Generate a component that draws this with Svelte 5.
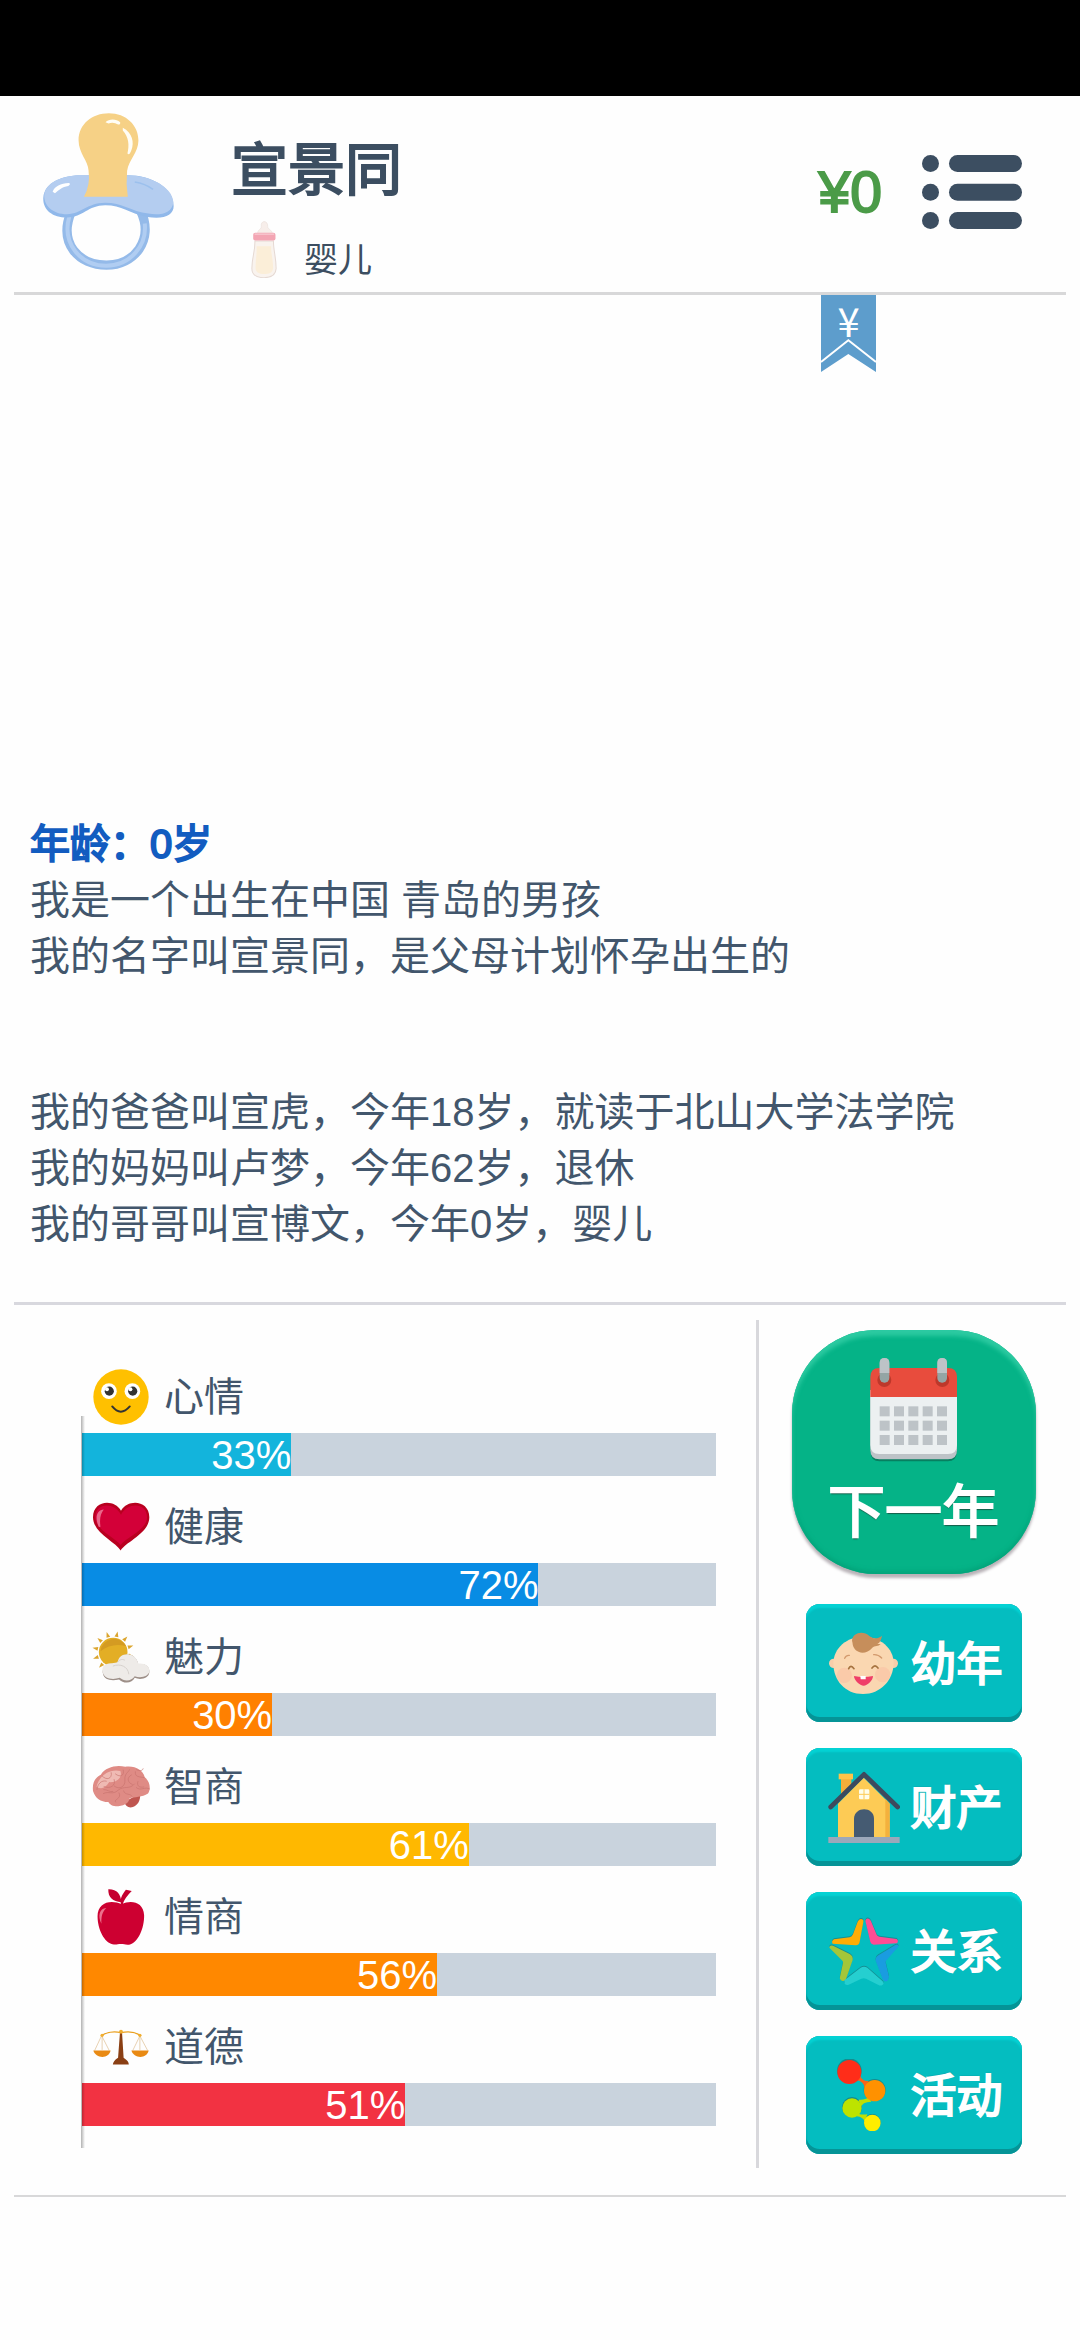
<script>
    const stats = [
        { icon: "mood", name: "心情", value: 33, color: "#13b4dc" },
        { icon: "heart", name: "健康", value: 72, color: "#088ce4" },
        { icon: "sun", name: "魅力", value: 30, color: "#ff8000" },
        { icon: "brain", name: "智商", value: 61, color: "#ffb800" },
        { icon: "apple", name: "情商", value: 56, color: "#ff8800" },
        { icon: "scale", name: "道德", value: 51, color: "#f23242" },
    ];

    const actions = [
        { icon: "baby", name: "幼年" },
        { icon: "house", name: "财产" },
        { icon: "star", name: "关系" },
        { icon: "dots", name: "活动" },
    ];

    const birth = ["我是一个出生在中国 青岛的男孩", "我的名字叫宣景同，是父母计划怀孕出生的"];
    const family = [
        "我的爸爸叫宣虎，今年18岁，就读于北山大学法学院",
        "我的妈妈叫卢梦，今年62岁，退休",
        "我的哥哥叫宣博文，今年0岁，婴儿",
    ];

    const rays = [...Array(12).keys()].map((i) => i * 30 + 12);
    const days = [...Array(15).keys()];
</script>

{#snippet statIcon(icon)}
    {#if icon === "mood"}
        <svg viewBox="97 57 174 172" aria-hidden="true">
            <circle cx="184" cy="143" r="85" fill="#ffc000" />
            <circle cx="147" cy="125" r="24" fill="#fff" />
            <circle cx="219" cy="125" r="24" fill="#fff" />
            <circle cx="148" cy="125" r="14" fill="#333" />
            <circle cx="220" cy="125" r="14" fill="#333" />
            <circle cx="141" cy="119" r="6" fill="#fff" />
            <circle cx="213" cy="119" r="6" fill="#fff" />
            <path d="M157 172q26 32 54 0" fill="none" stroke="#333" stroke-width="6" stroke-linecap="round" />
        </svg>
    {:else if icon === "heart"}
        <svg viewBox="96 447 174 172" aria-hidden="true">
            <path d="M182 605C166 578 97 552 97 503c0-52 64-58 86-20 22-38 87-32 87 20 0 49-71 75-88 102z" fill="#b8001f" />
            <path d="M182 588C165 566 104 542 104 503c0-46 58-48 79-8 21-40 80-38 80 8 0 39-62 60-81 85z" fill="#d30038" />
            <path d="M115 533c-14-30-6-52 15-54-9 12-14 28-10 53z" fill="#f08aa5" opacity=".75" />
        </svg>
    {:else if icon === "sun"}
        <svg viewBox="96 80 174 172" aria-hidden="true">
            {#each rays as r}
                <path d="M153 103l6-17 6 17z" fill="#dba52e" transform="rotate({r} 159 151)" />
            {/each}
            <circle cx="159" cy="151" r="44" fill="#e3ae25" />
            <path d="M120 148a42 42 0 0 1 79-15q-43-12-79 15z" fill="#d49b22" />
            <path d="M128 219c-5-18 6-32 27-31 11-4 15-3 19-4 2-33 54-36 62 4 23-2 36 9 34 25-1 19-28 25-45 17-7 18-35 19-48 5-25 6-46 0-49-16z" fill="#9d8f88" />
            <path d="M127 213c-5-18 7-29 28-28 8-2 14-2 18-4 4-32 55-33 63 5 22-2 36 9 34 24-2 17-28 22-45 15-8 15-32 17-46 5-25 8-49 1-52-17z" fill="#eeebe8" />
            <path d="M158 194c22-9 47 1 49 25M173 181c6-8 16-9 22-5" fill="none" stroke="#d5d0cc" stroke-width="3" />
        </svg>
    {:else if icon === "brain"}
        <svg viewBox="96 476 174 172" aria-hidden="true">
            <path d="M193 608l49-27c1 25-8 40-30 44-9 0-16-7-19-17z" fill="#bf5550" />
            <path d="M97 574c-3-27 8-42 24-50 15-23 48-31 75-24 31-4 54 10 60 32 17 14 19 36 10 50-18 12-42 10-57 15-2 16-20 24-42 24-14 0-20-9-23-13-24 0-40-12-47-34z" fill="#df8b85" />
            <path d="M108 561c7-33 40-56 73-48 8 25-16 35-34 34-13 20-26 23-39 14z" fill="#efbab3" />
            <path d="M109 570c2-18 14-30 29-26m-13-16c13 15 32 9 28-10m-22 43c20 8 37-4 31-22m0 20c17 14 35 0 33-18-2-21 11-23 14-32m-43 13c15 12 28 5 24-12m25 15c-15 7-13 24 3 29m9-39c-2 18 13 15 27 18m-23-24c11 6 19 2 20-3m-16 39c-5 13 4 20 18 17m-29-9c-14 18-33 4-50 19-18 16-27 1-45 10m48-2c10 19-18 19-11 28m25-34c4 15 22 6 26 17m13-27c14 12 26-5 41 4m-141 2c12-1 17 9 28 6" fill="none" stroke="#c8736d" stroke-width="2" stroke-linecap="round" />
        </svg>
    {:else if icon === "apple"}
        <svg viewBox="99 53 174 172" aria-hidden="true">
            <path d="M187 102c-6-15 1-31 14-47l18 4c-12 13-23 24-28 43zM187 94c-26-2-41-15-40-40 26-1 39 15 40 40z" fill="#c50030" />
            <path d="M188 100c28-14 67-8 69 34 1 39-19 86-46 90-13 1-15-2-25-2-11 0-14 3-26 1-25-5-46-46-46-86 0-43 41-53 74-37z" fill="#cd0031" />
            <path d="M126 160c-12-25-7-47 15-49-13 13-16 26-15 49z" fill="#ec718c" />
        </svg>
    {:else}
        <svg viewBox="96 441 174 172" aria-hidden="true">
            <path d="M123 493l-21 45m22-45l23 45m94-45l-22 45m22-45l24 45M125 493v43M241 493v43" fill="none" stroke="#dcb98a" stroke-width="2" />
            <path d="M125 491q25-15 58-8 34-8 59 8" fill="none" stroke="#e9a020" stroke-width="4" />
            <path d="M98 538h53c-5 27-46 25-53 0zM215 538h53c-6 27-46 25-53 0z" fill="#e98a14" />
            <path d="M180 480h6l5 80q16 10 16 21h-49q1-12 16-21z" fill="#8a3f14" />
            <circle cx="183" cy="480" r="6" fill="#f0ae30" />
            <circle cx="125" cy="491" r="5" fill="#f0ae30" />
            <circle cx="241" cy="491" r="5" fill="#f0ae30" />
        </svg>
    {/if}
{/snippet}

{#snippet actionIcon(icon)}
    {#if icon === "baby"}
        <svg viewBox="144 110 216 216" aria-hidden="true">
            <circle cx="161" cy="219" r="14" fill="#f7ceaa" />
            <circle cx="340" cy="219" r="14" fill="#f7ceaa" />
            <path d="M160 218c1-45 40-79 90-79 50 0 91 34 91 79-1 53-40 93-92 93-54 0-89-40-89-93z" fill="#fad7b1" />
            <circle cx="193" cy="255" r="23" fill="#f9c4a5" opacity=".7" />
            <circle cx="308" cy="253" r="23" fill="#f9c4a5" opacity=".7" />
            <path d="M216 151c2-25 34-31 52-14 13 10 25 9 38-1-2 12-6 20-14 25h10c-7 8-18 5-25 11-20 24-54 18-59-10 0-5-1-7-2-11z" fill="#c68e5b" />
            <path d="M194 204q3-10 14-9m73-2q14-1 24 10" fill="none" stroke="#d39a6e" stroke-width="4" stroke-linecap="round" />
            <path d="M206 235q6-14 16 0m54-2q9-13 18 0" fill="none" stroke="#a5723f" stroke-width="5" stroke-linecap="round" />
            <path d="M222 257q28 6 57 0c0 14-17 29-28 29s-29-16-29-29z" fill="#ef3f68" />
            <path d="M241 257h16v10h-15z" fill="#fff" />
        </svg>
    {:else if icon === "house"}
        <svg viewBox="144 542 216 216" aria-hidden="true">
            <path d="M183 562h31v34l-31 30z" fill="#f5ae3a" />
            <path d="M176 550h43v17h-43z" fill="#ffc348" />
            <path d="M251 562l78 78v100H174V640z" fill="#fdcb55" />
            <path d="M316 625l13 15v100h-13z" fill="#f4b13d" />
            <path d="M152 650l100-98 101 98" fill="none" stroke="#3d4a5e" stroke-width="14" stroke-linecap="round" stroke-linejoin="round" />
            <path d="M222 740v-55c1-38 60-38 60 0v55z" fill="#455b72" />
            <rect x="237" y="597" width="31" height="30" rx="4" fill="#fffde9" />
            <path d="M252 597v30m-15-15h31" stroke="#fdcb55" stroke-width="3" />
            <path d="M145 740h214v18H145z" fill="#9ca8ba" />
        </svg>
    {:else if icon === "star"}
        <svg viewBox="144 101 216 216" aria-hidden="true">
            <g fill="#148f94" transform="translate(0 -3)">
                <path d="M233 121q5-11 14-7 5 3 3 8l-11 60q-2 10-12 10l-69-5q-5-7 4-13l47-6q7-2 10-9z" />
                <path d="M256 118q3-9 10-6 5 2 7 8l17 40q2 5 8 6l52 7q7 5 1 13l-70 4q-8-1-10-8z" />
                <path d="M148 199q0-9 11-6l50 25q11 6 9 18l-21 60q-9 7-15-1-4-3-2-9l9-42q1-5-4-8z" />
                <path d="M356 195q-3-8-10-4l-51 31q-9 6-8 16l22 58q8 8 15 1l3-11-10-42q-1-6 5-10z" />
                <path d="M194 307l-1-10 49-38q10-6 20 0l46 41q6 8-1 11-5 4-13-1l-36-18q-6-3-14 0l-38 18q-7 3-12-3z" />
            </g>
            <path d="M233 121q5-11 14-7 5 3 3 8l-11 60q-2 10-12 10l-69-5q-5-7 4-13l47-6q7-2 10-9z" fill="#ffad05" />
            <path d="M256 118q3-9 10-6 5 2 7 8l17 40q2 5 8 6l52 7q7 5 1 13l-70 4q-8-1-10-8z" fill="#ff4c94" />
            <path d="M148 199q0-9 11-6l50 25q11 6 9 18l-21 60q-9 7-15-1-4-3-2-9l9-42q1-5-4-8z" fill="#a4c639" />
            <path d="M356 195q-3-8-10-4l-51 31q-9 6-8 16l22 58q8 8 15 1l3-11-10-42q-1-6 5-10z" fill="#1a9ce0" />
            <path d="M194 307l-1-10 49-38q10-6 20 0l46 41q6 8-1 11-5 4-13-1l-36-18q-6-3-14 0l-38 18q-7 3-12-3z" fill="#25cfd0" />
        </svg>
    {:else}
        <svg viewBox="144 536 216 216" aria-hidden="true">
            <g fill="#168b8e">
                <circle cx="208" cy="571" r="37" />
                <circle cx="284" cy="629" r="33" />
                <circle cx="216" cy="680" r="30" />
                <circle cx="277" cy="726" r="25" />
            </g>
            <path d="M240 586q8 18 26 16l-12 22q-2-20-22-24z" fill="#f7641b" />
            <path d="M266 650q-10 10-30 8l6 24q4-18 32-18zM234 700q14 4 28 2l-8 22q-4-14-24-16z" fill="#bede04" />
            <circle cx="208" cy="575" r="36" fill="#ff2d19" />
            <circle cx="284" cy="631" r="32" fill="#ff9100" />
            <circle cx="216" cy="683" r="29" fill="#bde300" />
            <circle cx="277" cy="728" r="25" fill="#ffed00" />
        </svg>
    {/if}
{/snippet}

<div class="page">
    <div class="notch"></div>
    <header>
        <svg class="pacifier" viewBox="129 99 394 471" aria-hidden="true">
            <path d="M214 395c-40 96 23 161 106 161s144-75 103-163" fill="none" stroke="#94bae9" stroke-width="28" />
            <path d="M208 410c-22 77 30 147 111 148 74-1 123-62 116-127" fill="none" stroke="#b0cdf2" stroke-width="12" />
            <path d="M130 352c5-50 66-71 142-66h108c72-2 142 37 142 92 0 29-31 41-79 33-54-10-77-35-127-35-53 1-65 35-115 37-45 0-74-25-71-61z" fill="#90b8ea" />
            <path d="M133 342c9-41 69-61 139-56h108c68-1 137 34 141 79-2 34-37 42-75 36-54-8-78-33-130-33-56 1-68 32-115 35-42 0-72-27-68-61z" fill="#b4cdf0" />
            <path d="M252 350q20-35 14-79c-1-29-30-52-30-91 0-48 41-81 91-81 52 0 89 36 89 82 0 37-29 57-34 91q-4 40 2 78z" fill="#f6d186" />
            <path d="M317 126c11-11 33-10 44 0q2 7-6 7-14-8-29-3zM369 143c29 14 35 45 26 67q-6 18-12 10c6-25 4-49-14-69z" fill="#fffdf5" />
            <path d="M158 335c6-16 24-25 49-26q7 3-2 9c-19 3-27 11-40 22z" fill="#fff" />
            <path d="M405 306q31 5 55 22" fill="none" stroke="#9cc0ed" stroke-width="5" />
        </svg>
        <div class="who">
            <h1 class="thick">宣景同</h1>
            <div class="stage">
                <svg viewBox="754 422 74 172" aria-hidden="true">
                    <path d="M772 463c0-14 11-12 11-22-3-19 20-19 19 0 0 10 12 8 14 22z" fill="#f7eeea" stroke="#eadfdb" stroke-width="2" />
                    <path d="M764 484h55c0 30 8 48 8 82-1 21-17 27-36 27s-36-6-36-27c0-34 10-50 9-82z" fill="#f9f3ee" stroke="#e5d9d3" stroke-width="3" />
                    <path d="M769 500h43c0 24 6 37 6 65-2 14-13 17-27 17s-24-4-25-17c0-26 4-39 3-65z" fill="#fbeed8" />
                    <rect x="759" y="460" width="66" height="23" rx="6" fill="#f3a5b3" />
                    <path d="M763 464h58" stroke="#f8c8cf" stroke-width="4" />
                </svg>
                <span>婴儿</span>
            </div>
        </div>
        <span class="money thick">¥0</span>
        <button class="menu" aria-label="菜单">
            <svg viewBox="426 222 300 226" aria-hidden="true">
                {#each [224, 310, 395] as y}
                    <circle cx="451.500" cy={y + 25.5} r="25.500" fill="#3c4e61" />
                    <rect x="507" {y} width="219" height="51" rx="25.500" fill="#3c4e61" />
                {/each}
            </svg>
        </button>
        <button class="ribbon" aria-label="理财">
            <svg viewBox="0 0 165 231" aria-hidden="true">
                <path d="M0 0h165v231L82 177 0 231z" fill="#5d9dcc" />
                <path d="M0 201l82-65 83 65" fill="none" stroke="#fff" stroke-width="6" />
            </svg>
            <span>¥</span>
        </button>
    </header>

    <main>
        <h2 class="thick">年龄：0岁</h2>
        {#each birth as line}
            <p>{line}</p>
        {/each}
        <div class="family">
            {#each family as line}
                <p>{line}</p>
            {/each}
        </div>
    </main>

    <section class="panel">
        <div class="stats">
            {#each stats as stat}
                <div class="stat">
                    <div class="label">
                        {@render statIcon(stat.icon)}
                        <span>{stat.name}</span>
                    </div>
                    <div class="track">
                        <div class="fill" style="width: {stat.value}%; background: {stat.color};">{stat.value}%</div>
                    </div>
                </div>
            {/each}
        </div>
        <div class="actions">
            <button class="next thick">
                <svg viewBox="393 204 261 312" aria-hidden="true">
                    <path d="M395 300h258v187q0 27-27 27H422q-27 0-27-27z" fill="#087f60" />
                    <path d="M394 300h260v181q0 27-27 27H421q-27 0-27-27z" fill="#bdc3c7" />
                    <path d="M394 300h260v165q0 27-27 27H421q-27 0-27-27z" fill="#ecf0f1" />
                    <path d="M394 321v-60q0-27 27-27h206q27 0 27 27v60z" fill="#e84c3d" />
                    <circle cx="436" cy="270" r="21" fill="#bd382b" />
                    <circle cx="610" cy="270" r="21" fill="#bd382b" />
                    {#each [422, 595] as x}
                        <rect {x} y="204" width="29" height="74" rx="14" fill="#94a5a5" />
                        <path d="M{x} 249v-30q0-15 14.500-15t14.500 15v30z" fill="#bdc3c7" />
                    {/each}
                    {#each days as d}
                        <rect x={422 + (d % 5) * 43} y={349 + Math.floor(d / 5) * 43} width="30" height="30" fill="#bdc3c7" />
                    {/each}
                </svg>
                <span>下一年</span>
            </button>
            {#each actions as action}
                <button class="action thick">
                    {@render actionIcon(action.icon)}
                    <span>{action.name}</span>
                </button>
            {/each}
        </div>
    </section>
</div>

<style>
    :global(body) {
        background: #fefefe;
    }
    .page {
        display: flex;
        flex-direction: column;
        box-sizing: border-box;
        min-height: 100vh;
        padding-bottom: 143px;
        color: #42566c;
        font-family: "Liberation Sans", "Noto Sans CJK SC", sans-serif;
        font-size: 40px;
    }
    h1, h2, p {
        margin: 0;
    }
    button {
        padding: 0;
        border: 0;
        background: none;
        font-family: "Noto Sans CJK SC", sans-serif;
        cursor: pointer;
    }
    svg {
        display: block;
        flex: none;
    }
    /* regular cut with a soft, rounded bold */
    .thick {
        font-weight: 400;
        -webkit-text-stroke: 2px currentColor;
        stroke-linejoin: round;
    }
    .notch {
        height: 96px;
        background: #000;
    }

    header {
        position: relative;
        display: flex;
        align-items: center;
        height: 196px;
        margin: 0 14px;
        padding: 0 44px 0 29px;
        border-bottom: 3px solid #d8d8d9;
    }
    .pacifier {
        width: 131px;
        height: 157px;
        margin-bottom: 6px;
    }
    .who {
        flex: 1;
        margin-left: 57px;
        padding-top: 15px;
    }
    h1 {
        color: #3c4e61;
        font-family: "Noto Sans CJK SC", sans-serif;
        font-size: 57px;
        line-height: 80px;
    }
    .stage {
        display: flex;
        align-items: flex-end;
        gap: 27px;
        margin: 15px 0 0 20px;
        color: #3c4e61;
        font-size: 34px;
        line-height: 36px;
    }
    .stage svg {
        width: 26px;
        height: 58px;
    }
    .money {
        margin-bottom: 4px;
        color: #4b9b48;
        font-size: 57px;
        line-height: 80px;
    }
    .menu {
        margin: 0 0 5px 40px;
    }
    .menu svg {
        width: 100px;
        height: 76px;
    }
    .ribbon {
        position: absolute;
        top: 199px;
        right: 190px;
        width: 55px;
        height: 77px;
    }
    .ribbon svg {
        width: 55px;
        height: 77px;
    }
    .ribbon span {
        position: absolute;
        top: 3px;
        left: 0;
        width: 100%;
        color: #fff;
        font-size: 40px;
        line-height: 44px;
        text-align: center;
    }

    main {
        display: flex;
        flex: 1;
        flex-direction: column;
        justify-content: flex-end;
        padding: 0 30px 50px;
        line-height: 56px;
    }
    h2 {
        color: #125cc0;
        font-size: 40px;
    }
    .family {
        margin-top: 100px;
    }

    .panel {
        display: grid;
        grid-template-columns: 1fr 310px;
        margin: 0 14px;
        padding: 15px 0 27px;
        border-top: 3px solid #d8d8de;
        border-bottom: 2px solid #d8d8d9;
    }
    .stats {
        position: relative;
        padding: 26px 40px 0 68px;
    }
    /* axis that shades the start of every bar */
    .stats::after {
        content: "";
        position: absolute;
        top: 96px;
        bottom: 20px;
        left: 67px;
        width: 4px;
        background: linear-gradient(90deg, rgba(0, 0, 0, 0.3), rgba(0, 0, 0, 0));
    }
    .label {
        display: flex;
        align-items: center;
        gap: 14px;
        padding: 23px 0 8px 10px;
        line-height: 56px;
    }
    .label svg {
        width: 58px;
        height: 56px;
    }
    .track {
        height: 43px;
        background: #c9d3dd;
    }
    .fill {
        height: 100%;
        color: #fff;
        line-height: 45px;
        text-align: right;
    }

    .actions {
        display: flex;
        flex-direction: column;
        align-items: center;
        gap: 26px;
        padding: 10px 0 14px 2px;
        border-left: 3px solid #d8d8dc;
    }
    .next {
        display: flex;
        flex-direction: column;
        align-items: center;
        width: 244px;
        height: 244px;
        margin-bottom: 4px;
        padding-top: 28px;
        border-radius: 84px;
        background: #05b387;
        box-shadow: inset 0 6px 4px #2ccaa1, inset 0 -3px 4px #03a47a, 0 4px 3px #b9b3b8;
        color: #fff;
        font-size: 57px;
        line-height: 80px;
        text-shadow: 0 2px 1px #175d4a;
    }
    .next svg {
        width: 87px;
        height: 104px;
        margin-bottom: 5px;
    }
    .action {
        display: flex;
        align-items: center;
        gap: 11px;
        width: 216px;
        height: 118px;
        padding-left: 22px;
        border-radius: 14px;
        background: #04bdc0;
        box-shadow: inset 0 4px 2px #04d2d4, inset 0 -5px 0 #059497, inset 0 0 2px #067f82;
        color: #fff;
        font-size: 46px;
        line-height: 60px;
        text-shadow: 0 -1px 1px #24585a;
    }
    .action span {
        margin-bottom: 6px;
    }
    .action svg {
        width: 72px;
        height: 72px;
    }
</style>
